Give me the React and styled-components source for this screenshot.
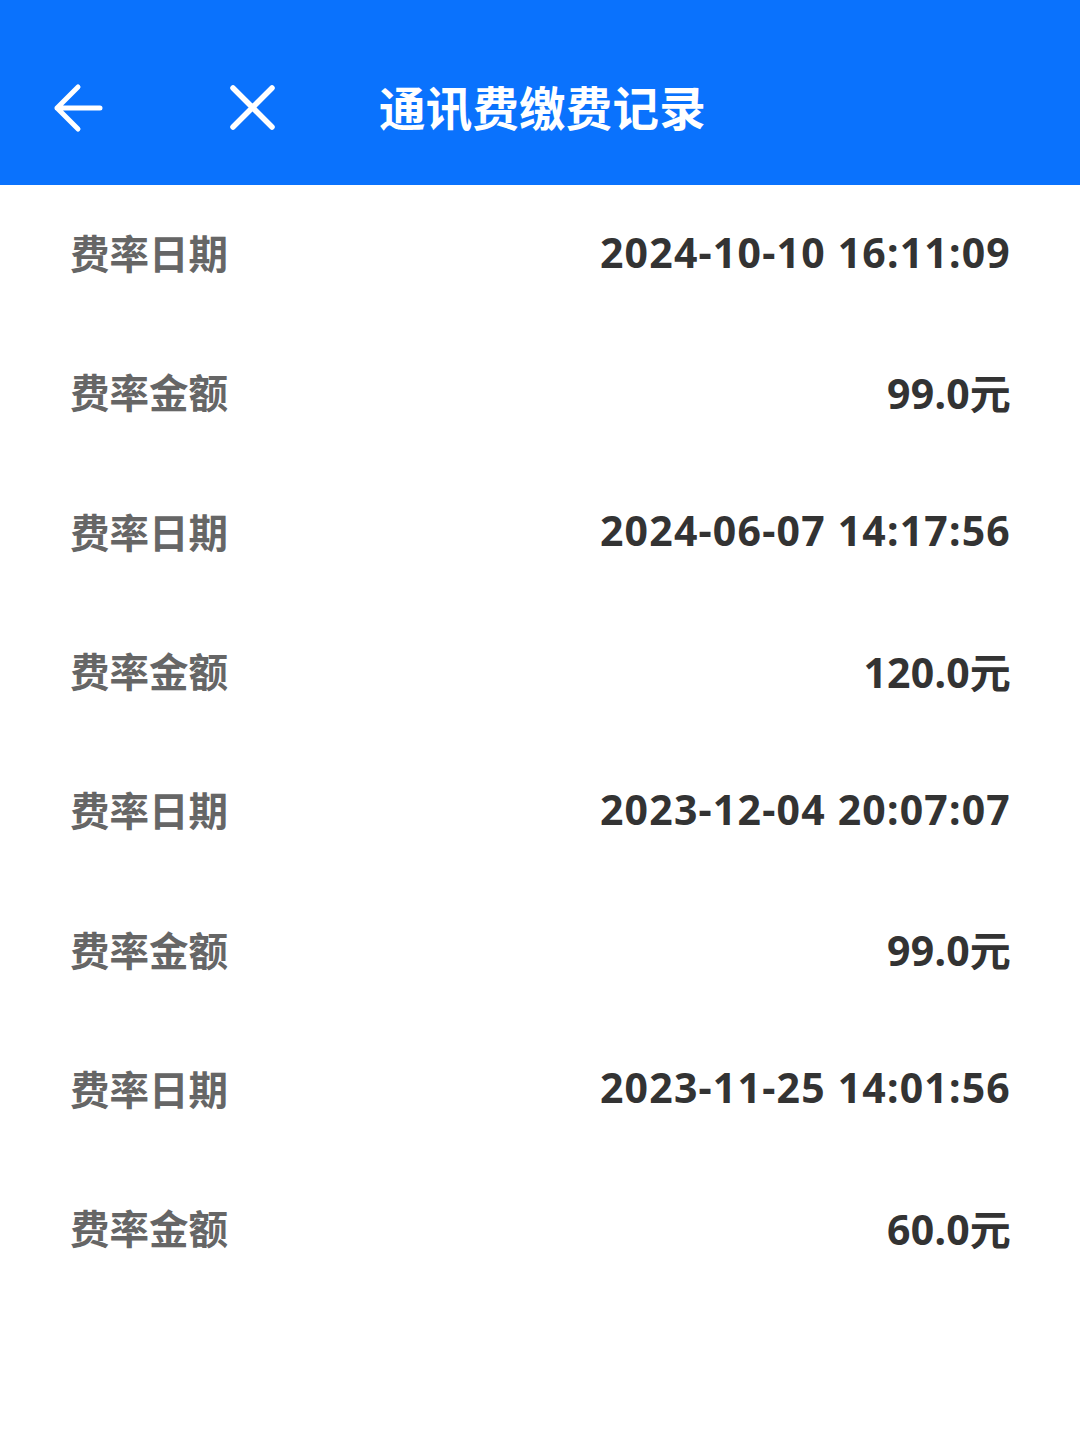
import React from "react";
import styled, { createGlobalStyle } from "styled-components";

const Global = createGlobalStyle`
  html, body { margin: 0; padding: 0; background: #ffffff; }
  body { font-family: "Noto Sans", "Noto Sans CJK SC", sans-serif; }
  * { box-sizing: border-box; }
`;

const Page = styled.div`
  width: 1080px;
  min-height: 1446px;
  background: #ffffff;
  display: flex;
  flex-direction: column;
`;

const Header = styled.header`
  height: 185px;
  background: #0a72fd;
  display: flex;
  align-items: center;
  padding: 31px 0 0 52px;
`;

const IconButton = styled.button`
  width: 52px;
  height: 52px;
  padding: 0;
  border: none;
  background: transparent;
  display: flex;
  align-items: center;
  justify-content: center;
  margin-right: ${(p) => p.$gap || 0}px;
`;

const Title = styled.h1`
  margin: 0;
  margin-top: -6px;
  color: #ffffff;
  font-family: "Noto Sans CJK SC", sans-serif;
  font-weight: 700;
  font-size: 46.5px;
  letter-spacing: 0.2px;
`;

const List = styled.div`
  display: flex;
  flex-direction: column;
  margin-top: -3px;
`;

const Row = styled.div`
  height: 139.3px;
  display: flex;
  align-items: center;
  justify-content: space-between;
  padding: 0 70px 0 70px;
`;

const Label = styled.span`
  color: #666666;
  font-family: "Noto Sans CJK SC", sans-serif;
  font-weight: 700;
  font-size: 39.5px;
`;

const Value = styled.span`
  color: #333333;
  font-family: "Noto Sans", "Noto Sans CJK SC", sans-serif;
  font-weight: 700;
  font-size: 41px;
  letter-spacing: ${(p) => (p.$tight ? "0.2px" : "1.2px")};
  margin-right: -1px;
`;

const records = [
  { date: "2024-10-10 16:11:09", amount: "99.0元" },
  { date: "2024-06-07 14:17:56", amount: "120.0元" },
  { date: "2023-12-04 20:07:07", amount: "99.0元" },
  { date: "2023-11-25 14:01:56", amount: "60.0元" },
];

export default function App() {
  return (
    <Page>
      <Global />
      <Header>
        <IconButton $gap={122} aria-label="返回">
          <svg width="52" height="52" viewBox="0 0 52 52" fill="none">
            <path
              d="M26 5 L5 26 L26 47 M5 26 H48"
              stroke="#ffffff"
              strokeWidth="5"
              strokeLinecap="round"
              strokeLinejoin="round"
            />
          </svg>
        </IconButton>
        <IconButton $gap={101} aria-label="关闭">
          <svg width="52" height="52" viewBox="0 0 52 52" fill="none">
            <path
              d="M7 6 L46 45 M46 6 L7 45"
              stroke="#ffffff"
              strokeWidth="5.5"
              strokeLinecap="round"
            />
          </svg>
        </IconButton>
        <Title>通讯费缴费记录</Title>
      </Header>
      <List>
        {records.map((r, i) => (
          <React.Fragment key={i}>
            <Row>
              <Label>费率日期</Label>
              <Value>{r.date}</Value>
            </Row>
            <Row>
              <Label>费率金额</Label>
              <Value $tight>{r.amount}</Value>
            </Row>
          </React.Fragment>
        ))}
      </List>
    </Page>
  );
}
